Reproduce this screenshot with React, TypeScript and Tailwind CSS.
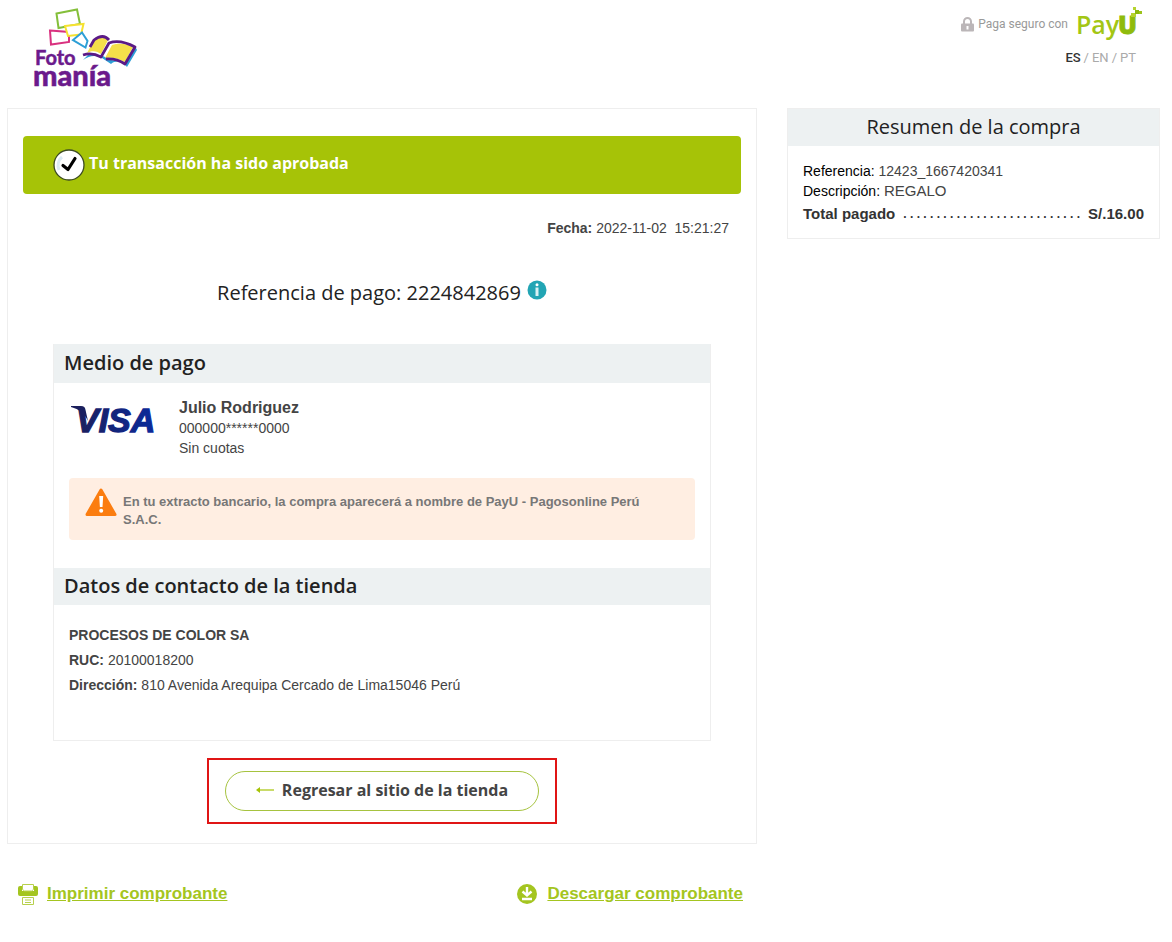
import type { ReactNode } from "react";

const heading = "font-['Open_Sans',sans-serif] text-[#222]";

function FotomaniaLogo() {
  return (
    <svg width="108" height="92" viewBox="0 0 108 92" role="img" aria-label="Foto manía">
      <g fill="none" strokeWidth="2">
        <path d="M23.500 7.500 44 3.500 47 18 25.500 22z" stroke="#84bf3a" />
        <path d="M17 24.500 36 26 36 36 18 38.500z" stroke="#d9317f" />
        <path d="M32 20 50.500 18 48 28.500 35 30z" stroke="#f6e22f" fill="#fff" />
        <path d="M49 26.500 54.500 35 52.500 41.500 40 34z" stroke="#2c9fd6" fill="#fff" />
      </g>
      <path d="M50 54C57 49 63 49 69 52L78 58C83 54 89 55 94 61L104 44 102 40 92 56 78 54 68 49 55 49z" fill="#2c9fd6" />
      <path d="M54 47 61 34C66 30 72 30 75 34L68 48C64 45 59 44 54 47z" fill="#f5df4a" />
      <path d="M72 52 79 39C85 37 93 37 100 41L92 56C85 52 79 51 72 52z" fill="#f5df4a" />
      <path
        d="M50 49Q59 46 68 51L76 37Q87 33 102 41L92 58Q83 52 73 53M57 41 61 34Q70 27 76 34"
        fill="none"
        stroke="#5b1a86"
        strokeWidth="2.800"
        strokeLinejoin="round"
      />
      <g fill="#6b1a8c" stroke="#6b1a8c">
        <text x="2" y="59" fontSize="20" fontWeight="700" strokeWidth="0.500" fontFamily="Lato, sans-serif">Foto</text>
        <text x="0" y="80" fontSize="29" fontWeight="900" strokeWidth="0.500" fontFamily="Lato, sans-serif">manía</text>
      </g>
    </svg>
  );
}

function PayULogo() {
  return (
    <svg width="68" height="36" viewBox="0 0 68 36" role="img" aria-label="PayU">
      <g fontFamily="'Open Sans', sans-serif" fill="#a3c614">
        <text x="0" y="28" fontSize="25" fontWeight="600">Pay</text>
        <text x="42" y="28" fontSize="25" fontWeight="800" fill="#8fbb0c" stroke="#8fbb0c" strokeWidth="0.800">U</text>
      </g>
      <path d="M55 7h5v4h-5z" fill="#b5d32f" />
      <path d="M59 4h4v4h-4z" fill="#8cb80f" />
      <path d="M57 1h3v3h-3z" fill="#b5d32f" />
      <path d="M63 5h3v3h-3z" fill="#9cc31b" />
    </svg>
  );
}

function LockIcon() {
  return (
    <svg width="13" height="15" viewBox="0 0 13 15" aria-hidden="true">
      <path d="M3 7V4.500a3.500 3.500 0 0 1 7 0V7" fill="none" stroke="#bbb6b8" strokeWidth="2" />
      <rect y="6.500" width="13" height="8" rx="1" fill="#bbb6b8" />
      <path d="M5.500 9h2v3.500h-2z" fill="#fff" />
    </svg>
  );
}

function CheckBadge() {
  return (
    <svg width="32" height="32" viewBox="0 0 32 32" aria-hidden="true">
      <circle cx="16" cy="16" r="15" fill="#fff" stroke="#3b4a22" strokeWidth="1.300" />
      <path d="M6 21A11 11 0 0 1 9 8" fill="none" stroke="#dcebf3" strokeWidth="3" />
      <path d="m10 16.500 5 4L22 9.500" fill="none" stroke="#000" strokeWidth="3.200" strokeLinecap="round" strokeLinejoin="round" />
    </svg>
  );
}

function InfoIcon() {
  return (
    <svg width="20" height="20" viewBox="0 0 20 20" aria-hidden="true">
      <circle cx="10" cy="10" r="9.500" fill="#22a5b4" />
      <circle cx="10" cy="4.800" r="1.500" fill="#fff" />
      <path d="M8.500 7.500h3v8.500h-3z" fill="#d8f1f4" />
    </svg>
  );
}

function VisaLogo() {
  return (
    <svg width="94" height="46" viewBox="0 0 94 46" role="img" aria-label="VISA">
      <defs>
        <linearGradient id="visa" x1="0" x2="1">
          <stop offset="0" stopColor="#1b1f5c" />
          <stop offset="1" stopColor="#0a2a9c" />
        </linearGradient>
      </defs>
      <path d="M0 8h10c3 0 4 1 4.500 4L17 23C14 16 8 11 0 9z" fill="#1b1f5c" />
      <text
        x="5"
        y="34"
        fontSize="34"
        fontWeight="700"
        fontStyle="italic"
        fontFamily="'Liberation Sans', Arial, sans-serif"
        fill="url(#visa)"
        stroke="url(#visa)"
        strokeWidth="1.300"
      >
        VISA
      </text>
    </svg>
  );
}

function WarningIcon() {
  return (
    <svg width="32" height="29" viewBox="0 0 32 29" aria-hidden="true">
      <path d="M16 2 30 26.500H2z" fill="#fb7d10" stroke="#fb7d10" strokeWidth="3" strokeLinejoin="round" />
      <path d="M14.200 8h4l-.7 11h-2.600z" fill="#fff" />
      <circle cx="16.200" cy="22.800" r="2" fill="#fff" />
    </svg>
  );
}

function ArrowIcon() {
  return (
    <svg width="18" height="8" viewBox="0 0 18 8" aria-hidden="true">
      <path d="M2 4h16" stroke="#a6c307" strokeWidth="1.200" />
      <path d="M0 4 4 1v6z" fill="#a6c307" />
    </svg>
  );
}

function PrinterIcon() {
  return (
    <svg width="22" height="22" viewBox="0 0 22 22" aria-hidden="true">
      <path d="M3 3h2v5h12V3h2q2 0 2 2v6q0 2-2 2H3q-2 0-2-2V5q0-2 2-2z" fill="#a4c520" />
      <path d="M5.500 1.500h11v5l-2 1.500h-7l-2-1.500z" fill="#fff" stroke="#b7d04d" />
      <path d="M5.500 14.500h11v7h-11z" fill="#fff" stroke="#b7d04d" />
      <path d="M8 17h6M8 19.500h6" stroke="#b7d04d" />
    </svg>
  );
}

function DownloadIcon() {
  return (
    <svg width="20" height="20" viewBox="0 0 20 20" aria-hidden="true">
      <circle cx="10" cy="10" r="10" fill="#a4c520" />
      <path d="M10 3v8M5.500 7.500l4.500 4 4.500-4M5 15h10" fill="none" stroke="#fff" strokeWidth="2.400" />
    </svg>
  );
}

function Detail({ label, children }: { label: string; children: ReactNode }) {
  return (
    <p>
      <strong>{label}</strong> {children}
    </p>
  );
}

export default function App() {
  return (
    <div className="bg-white pb-9 pl-[7px] pr-3 font-['Liberation_Sans',Arial,sans-serif] text-sm text-[#444]">
      <header className="flex h-[108px] items-start justify-between pl-[26px] pr-4 pt-1.5">
        <FotomaniaLogo />
        <div className="flex flex-col items-end">
          <div className="flex items-center">
            <LockIcon />
            <span className="ml-1 mr-2 font-[Roboto,sans-serif] text-xs text-[#999]">Paga seguro con</span>
            <PayULogo />
          </div>
          <nav aria-label="Idioma" className="mr-2 mt-1 flex gap-[3px] font-[Roboto,sans-serif] text-[13px] leading-6 text-[#aaa]">
            <a href="#es" className="font-medium text-[#333]">ES</a>
            <span>/</span>
            <a href="#en">EN</a>
            <span>/</span>
            <a href="#pt">PT</a>
          </nav>
        </div>
      </header>

      <div className="grid grid-cols-[750fr_373fr] items-start gap-[30px]">
        <main>
          <section className="border border-[#eee] px-[15px] pb-[19px] pt-[27px]">
            <div className="flex h-[58px] items-center gap-1 rounded bg-[#a6c307] pl-[30px]">
              <CheckBadge />
              <h1 className="pb-1 font-['Open_Sans',sans-serif] text-base font-bold leading-6 text-white">
                Tu transacción ha sido aprobada
              </h1>
            </div>
            <p className="mt-6 whitespace-pre pr-3 text-right leading-5">
              <strong>Fecha:</strong> 2022-11-02  15:21:27
            </p>
            <div className="mt-10 flex items-start justify-center gap-1.5">
              <h2 className={`${heading} text-xl leading-[30px]`}>Referencia de pago: 2224842869</h2>
              <button type="button" aria-label="Información de la referencia" className="mt-0.5">
                <InfoIcon />
              </button>
            </div>

            <div className="mx-[30px] mt-9 border border-t-0 border-[#eee]">
              <h2 className={`${heading} bg-[#edf1f2] px-2.5 pb-0.5 text-xl font-semibold leading-[37px]`}>Medio de pago</h2>
              <div className="px-[15px] pt-[15px]">
                <div className="flex">
                  <div className="w-[110px] pl-0.5">
                    <VisaLogo />
                  </div>
                  <div className="leading-5">
                    <p className="text-base font-bold leading-5">Julio Rodriguez</p>
                    <p>000000******0000</p>
                    <p>Sin cuotas</p>
                  </div>
                </div>
                <div className="mt-5 flex gap-1.5 rounded bg-[#ffeee2] px-4 pb-[11px] pt-2.5 text-[#777]">
                  <WarningIcon />
                  <p className="flex-1 pr-8 pt-[5px] text-[13px] font-bold leading-[18px]">
                    En tu extracto bancario, la compra aparecerá a nombre de PayU - Pagosonline Perú S.A.C.
                  </p>
                </div>
              </div>
              <h2 className={`${heading} mt-7 bg-[#edf1f2] px-2.5 pb-0.5 text-xl font-semibold leading-[35px]`}>
                Datos de contacto de la tienda
              </h2>
              <div className="px-[15px] pb-[42px] pt-[18px] leading-[25px]">
                <p className="font-bold">PROCESOS DE COLOR SA</p>
                <Detail label="RUC:">20100018200</Detail>
                <Detail label="Dirección:">810 Avenida Arequipa Cercado de Lima15046 Perú</Detail>
              </div>
            </div>

            <div className="mx-auto mt-[17px] w-fit border-2 border-[#e01515] px-4 py-[11px]">
              <button
                type="button"
                className="flex h-10 items-center gap-2 rounded-full border border-[#a6c33f] px-[30px] pb-0.5 font-['Open_Sans',sans-serif] text-base font-bold text-[#444]"
              >
                <ArrowIcon />
                Regresar al sitio de la tienda
              </button>
            </div>
          </section>

          <div className="mt-[38px] flex justify-between pl-2.5 pr-3.5 text-[17px] font-bold leading-6 text-[#a4c520]">
            <a href="#imprimir" className="flex items-center gap-2">
              <PrinterIcon />
              <span className="underline">Imprimir comprobante</span>
            </a>
            <a href="#descargar" className="flex items-center gap-2.5">
              <DownloadIcon />
              <span className="underline">Descargar comprobante</span>
            </a>
          </div>
        </main>

        <aside className="border border-[#eee]">
          <h2 className={`${heading} bg-[#edf1f2] pb-0.5 text-center text-xl leading-[35px]`}>Resumen de la compra</h2>
          <div className="px-[15px] pb-3.5 pt-[15px] leading-5">
            <p>
              <span className="text-black">Referencia:</span> 12423_1667420341
            </p>
            <p>
              <span className="text-black">Descripción:</span> <span className="text-[15px]">REGALO</span>
            </p>
            <p className="mt-[3px] flex justify-between text-[15px] font-bold text-[#333]">
              <span>Total pagado</span>
              <span className="text-xs leading-5">. . . . . . . . . . . . . . . . . . . . . . . . . . .</span>
              <span>S/.16.00</span>
            </p>
          </div>
        </aside>
      </div>
    </div>
  );
}
